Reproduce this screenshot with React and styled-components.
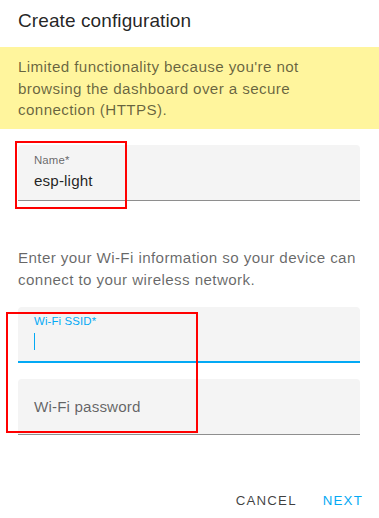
import React from 'react';
import styled, { createGlobalStyle, css } from 'styled-components';

const GlobalStyle = createGlobalStyle`
  html, body {
    margin: 0;
    padding: 0;
    background: #fff;
    font-family: "Liberation Sans", Arial, sans-serif;
  }
`;

const Dialog = styled.div`
  position: relative;
  width: 379px;
  height: 518px;
  overflow: hidden;
  background: #fff;
  display: flex;
  flex-direction: column;
`;

const Title = styled.h2`
  margin: 0;
  padding: 9px 18px 14px;
  font-size: 19px;
  line-height: 24px;
  font-weight: 400;
  letter-spacing: 0.1px;
  color: rgba(0, 0, 0, 0.87);
`;

const Banner = styled.div`
  background: #fff59d;
  padding: 9px 18px 8px;
  font-size: 15.2px;
  line-height: 21.7px;
  color: rgba(0, 0, 0, 0.6);
  letter-spacing: 0.38px;
`;

const Content = styled.div`
  padding: 16px 19px 0 18px;
  display: flex;
  flex-direction: column;
`;

const Text = styled.p`
  margin: 46px 0 16px;
  font-size: 15.2px;
  line-height: 22px;
  color: rgba(0, 0, 0, 0.6);
  letter-spacing: 0.38px;
`;

const FieldBox = styled.div`
  position: relative;
  height: 56px;
  box-sizing: border-box;
  background: #f4f4f4;
  border-radius: 4px 4px 0 0;
  padding: 0 16px;
  display: flex;
  flex-direction: column;
  justify-content: center;
  border-bottom: ${p => (p.focused ? '2px solid #03a9f4' : '1px solid rgba(0, 0, 0, 0.42)')};
  & + & {
    margin-top: 16px;
  }
`;

const Label = styled.span`
  font-size: ${p => (p.float ? '11.4px' : '15.2px')};
  line-height: ${p => (p.float ? '14px' : '20px')};
  color: ${p => (p.focused ? '#03a9f4' : 'rgba(0, 0, 0, 0.6)')};
  letter-spacing: 0.14px;
  ${p => p.float && css`
    margin-top: ${p.focused ? '-3px' : '-2px'};
  `}
`;

const Value = styled.span`
  margin-top: 4px;
  font-size: 15.2px;
  line-height: 20px;
  color: rgba(0, 0, 0, 0.87);
  letter-spacing: 0.14px;
  min-height: 20px;
  display: flex;
  align-items: center;
`;

const Caret = styled.span`
  display: inline-block;
  width: 1px;
  height: 17px;
  background: #03a9f4;
`;

const Actions = styled.div`
  margin-top: auto;
  display: flex;
  justify-content: flex-end;
  gap: 10px;
  padding: 0 8px;
  height: 36px;
`;

const Button = styled.button`
  border: none;
  background: none;
  padding: 0 8px;
  height: 36px;
  font-family: "Liberation Sans", Arial, sans-serif;
  font-size: 13.3px;
  font-weight: 400;
  letter-spacing: 1.19px;
  text-transform: uppercase;
  color: ${p => (p.primary ? '#03a9f4' : 'rgba(0, 0, 0, 0.75)')};
  cursor: pointer;
`;

const Marker = styled.div`
  position: absolute;
  border: 2px solid #f00;
  box-sizing: border-box;
  pointer-events: none;
`;

const Field = ({ label, value, focused }) => {
  const float = focused || !!value;
  return (
    <FieldBox focused={focused}>
      <Label float={float} focused={focused}>{label}</Label>
      {float && (
        <Value>{value || (focused && <Caret />)}</Value>
      )}
    </FieldBox>
  );
};

export default function App() {
  return (
    <>
      <GlobalStyle />
      <Dialog>
        <Title>Create configuration</Title>
        <Banner>
          Limited functionality because you're not browsing the dashboard over a secure connection (HTTPS).
        </Banner>
        <Content>
          <Field label="Name*" value="esp-light" />
          <Text>Enter your Wi-Fi information so your device can connect to your wireless network.</Text>
          <Field label="Wi-Fi SSID*" focused />
          <Field label="Wi-Fi password" />
        </Content>
        <Actions>
          <Button>Cancel</Button>
          <Button primary>Next</Button>
        </Actions>
        <Marker style={{ left: 15, top: 141, width: 112, height: 68 }} />
        <Marker style={{ left: 6, top: 312, width: 192, height: 121 }} />
      </Dialog>
    </>
  );
}
